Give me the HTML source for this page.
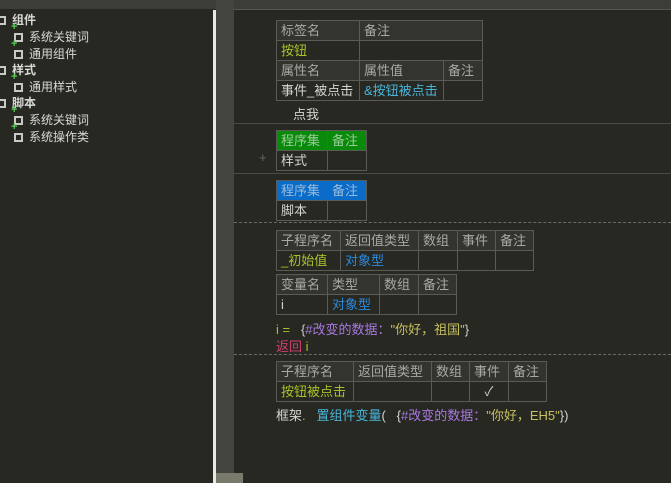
<!DOCTYPE html><html><head><meta charset="utf-8"><style>
*{margin:0;padding:0;box-sizing:border-box}
body{width:671px;height:483px;overflow:hidden;background:#272822;font-family:"Liberation Sans","Noto Sans CJK SC",sans-serif;font-size:13px;color:#d4d4d0;position:relative}
.a{position:absolute}
.tb{left:0;top:0;width:671px;height:9px;background:#3c3c38}
.tree div{position:absolute;white-space:nowrap;font-size:12px;color:#d8d8d4}
.b{font-weight:bold}
.box{display:inline-block;width:9px;height:9px;border:2px solid #c8c8c4;margin-right:6px;vertical-align:-1px}
.pl{color:#5c5;font-size:11px;font-weight:bold;position:absolute;margin-left:-3px;margin-top:-7px}
table{position:absolute;border-collapse:collapse}
td{border:1px solid #5a5a56;height:20px;padding:0 4px;white-space:nowrap;line-height:18px}
.h td{background:#34342f;color:#a8a8a4}
.g td{background:#0a8a0a;color:#9c9}
.bl td{background:#0a6cc8;color:#9bd}
.y{color:#a6c22a}.c{color:#4ab4d8}.u{color:#2a8ae0}.p{color:#a878e0}.s{color:#c8c060}.r{color:#d04070}
.hl{position:absolute;left:234px;width:437px;height:0;border-top:1px solid #4a4a46}
.dl{position:absolute;left:234px;width:437px;height:0;border-top:1px dashed #6a6a66}
</style></head><body>
<div class="a tb"></div>
<div class="tree">
<div class="b" style="left:-3px;top:11px"><span class="box"></span>组件</div>
<div style="left:14px;top:28px"><span class="pl">+</span><span class="box"></span>系统关键词</div>
<div style="left:14px;top:45px"><span class="pl">+</span><span class="box"></span>通用组件</div>
<div class="b" style="left:-3px;top:61px"><span class="box"></span>样式</div>
<div style="left:14px;top:78px"><span class="pl">+</span><span class="box"></span>通用样式</div>
<div class="b" style="left:-3px;top:94px"><span class="box"></span>脚本</div>
<div style="left:14px;top:111px"><span class="pl">+</span><span class="box"></span>系统关键词</div>
<div style="left:14px;top:128px"><span class="pl">+</span><span class="box"></span>系统操作类</div>
</div>
<div class="a" style="left:213px;top:10px;width:3px;height:473px;background:#e8e8e8"></div>
<div class="a" style="left:216px;top:0;width:18px;height:483px;background:#45453f"></div>
<div class="a" style="left:216px;top:473px;width:27px;height:10px;background:#7a7a6c"></div>
<div class="a" style="left:234px;top:9px;width:437px;height:1px;background:#555"></div>

<table style="left:276px;top:20px;width:207px">
<tr class="h"><td style="width:83px">标签名</td><td colspan="2">备注</td></tr>
<tr><td class="y">按钮</td><td colspan="2"></td></tr>
<tr class="h"><td>属性名</td><td style="width:84px">属性值</td><td>备注</td></tr>
<tr><td>事件_被点击</td><td class="c">&amp;按钮被点击</td><td></td></tr>
</table>
<div class="a" style="left:293px;top:104px">点我</div>
<div class="hl" style="top:123px"></div>
<table style="left:276px;top:130px;width:91px">
<tr class="g"><td style="width:51px">程序集</td><td>备注</td></tr>
<tr><td>样式</td><td></td></tr></table>
<div class="a" style="left:259px;top:150px;color:#666">+</div>
<div class="hl" style="top:173px"></div>
<table style="left:276px;top:180px;width:91px">
<tr class="bl"><td style="width:51px">程序集</td><td>备注</td></tr>
<tr><td>脚本</td><td></td></tr></table>
<div class="dl" style="top:222px"></div>
<table style="left:276px;top:230px;width:258px">
<tr class="h"><td style="width:64px">子程序名</td><td style="width:78px">返回值类型</td><td style="width:39px">数组</td><td style="width:38px">事件</td><td>备注</td></tr>
<tr><td class="y">_初始值</td><td class="u">对象型</td><td></td><td></td><td></td></tr></table>
<table style="left:276px;top:274px;width:181px">
<tr class="h"><td style="width:51px">变量名</td><td style="width:52px">类型</td><td style="width:39px">数组</td><td>备注</td></tr>
<tr><td>i</td><td class="u">对象型</td><td></td><td></td></tr></table>
<div class="a y" style="left:276px;top:319px">i =&nbsp;&nbsp;&nbsp;<span style="color:#ccc">{</span><span class="p">#改变的数据：</span><span class="s">"你好，祖国"</span><span style="color:#ccc">}</span></div>
<div class="a" style="left:276px;top:336px"><span class="r">返回</span> <span class="y">i</span></div>
<div class="dl" style="top:354px"></div>
<table style="left:276px;top:361px;width:271px">
<tr class="h"><td style="width:77px">子程序名</td><td style="width:78px">返回值类型</td><td style="width:38px">数组</td><td style="width:39px">事件</td><td>备注</td></tr>
<tr><td class="y">按钮被点击</td><td></td><td></td><td style="text-align:center;color:#ccc">✓</td><td></td></tr></table>
<div class="a" style="left:276px;top:405px;white-space:nowrap">框架<span class="y">.</span>&nbsp;&nbsp;&nbsp;<span class="c">置组件变量</span>(&nbsp;&nbsp;&nbsp;{<span class="p">#改变的数据：</span><span class="s">"你好，EH5"</span>})</div>
</body></html>
